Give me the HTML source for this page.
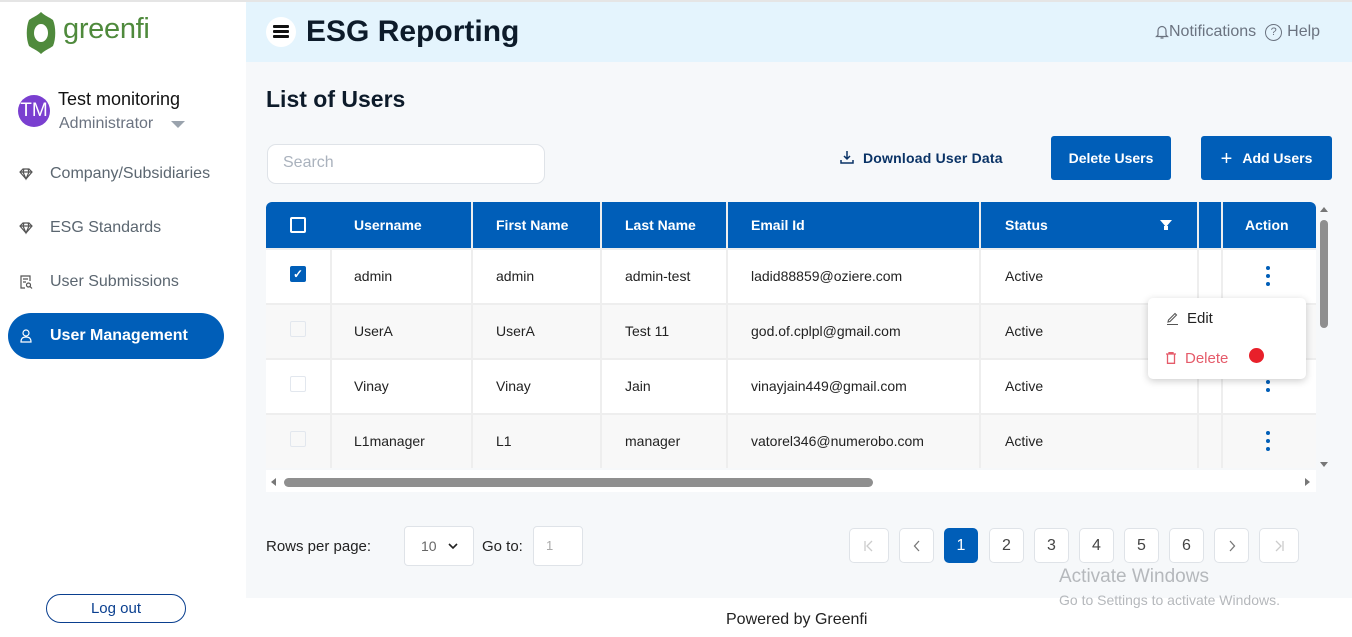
<!DOCTYPE html>
<html><head><meta charset="utf-8"><style>
*{box-sizing:border-box;margin:0;padding:0}
body{width:1352px;height:637px;overflow:hidden;position:relative;background:#fff;font-family:"Liberation Sans",sans-serif;color:#111}
.a{position:absolute}
.nav{position:absolute;left:18px;font-size:16px;color:#5b6670;display:flex;align-items:center}
.nav svg{margin-right:16px}
.th{position:absolute;top:202px;height:46px;color:#fff;font-weight:bold;font-size:14px;line-height:46px}
.cell{position:absolute;font-size:14px;color:#222}
.pg{position:absolute;top:528px;width:35px;height:35px;border:1px solid #dfe3e8;border-radius:5px;background:#fff;text-align:center;line-height:33px;font-size:16px;color:#444}
.pg svg{position:absolute;left:50%;top:50%;transform:translate(-50%,-50%)}
</style></head><body>
<div class="a" style="left:0;top:0;width:1352px;height:2px;background:#e5e5e5"></div>
<!-- sidebar -->
<svg class="a" style="left:26px;top:11px" width="30" height="44" viewBox="0 0 30 44"><path d="M15 1 C19 5 23 6 27 9 C30 16 30 28 27 35 C23 38 19 39 15 43 C11 39 7 38 3 35 C0 28 0 16 3 9 C7 6 11 5 15 1Z" fill="#4f8a3c"/><ellipse cx="15" cy="22" rx="7" ry="9" fill="#fff"/></svg>
<div class="a" style="left:63px;top:13px;font-size:29px;color:#4f8a3c;letter-spacing:-0.3px">greenfi</div>
<div class="a" style="left:18px;top:95px;width:32px;height:32px;border-radius:50%;background:#7a3fd0;color:#fff;font-size:19px;line-height:32px;text-align:center">TM</div>
<div class="a" style="left:58px;top:89px;font-size:18px;color:#111">Test monitoring</div>
<div class="a" style="left:59px;top:115px;font-size:16px;color:#6b7380">Administrator</div>
<div class="a" style="left:171px;top:121px;border-left:7px solid transparent;border-right:7px solid transparent;border-top:7px solid #9aa3ad"></div>
<div class="nav" style="top:165px"><svg width="16" height="16" viewBox="0 0 16 16" fill="none" stroke="#555" stroke-width="1.2"><path d="M2 6 L5 3 H11 L14 6 L8 13Z M2 6 H14 M6 3 L5 6 L8 13 L11 6 L10 3"/></svg>Company/Subsidiaries</div>
<div class="nav" style="top:219px"><svg width="16" height="16" viewBox="0 0 16 16" fill="none" stroke="#555" stroke-width="1.2"><path d="M2 6 L5 3 H11 L14 6 L8 13Z M2 6 H14 M6 3 L5 6 L8 13 L11 6 L10 3"/></svg>ESG Standards</div>
<div class="nav" style="top:273px"><svg width="16" height="16" viewBox="0 0 16 16" fill="none" stroke="#555" stroke-width="1.2"><path d="M12 7 V2 H3 V14 H7 M5 5 H10 M5 8 H8"/><circle cx="10.5" cy="11" r="2"/><path d="M12 12.5 L14 14.5"/></svg>User Submissions</div>
<div class="a" style="left:8px;top:313px;width:216px;height:46px;border-radius:23px;background:#005eb8"></div>
<div class="nav" style="top:327px;color:#fff;font-weight:bold"><svg width="16" height="16" viewBox="0 0 16 16" fill="none" stroke="#fff" stroke-width="1.2"><circle cx="8" cy="5" r="3"/><path d="M3 14 C3 10 5 9 8 9 C11 9 13 10 13 14Z"/></svg>User Management</div>
<div class="a" style="left:46px;top:594px;width:140px;height:29px;border:1.5px solid #0a3f8f;border-radius:15px;text-align:center;line-height:27px;font-size:15px;color:#0a3f8f">Log out</div>
<!-- header -->
<div class="a" style="left:246px;top:2px;width:1106px;height:60px;background:#e4f4fd"></div>
<div class="a" style="left:266px;top:17px;width:30px;height:30px;border-radius:50%;background:#fff"></div>
<div class="a" style="left:273px;top:25px;width:16px;height:3px;background:#111;box-shadow:0 5px 0 #111,0 10px 0 #111;border-radius:1px"></div>
<div class="a" style="left:306px;top:15px;font-size:30px;font-weight:bold;color:#0d1b2a">ESG Reporting</div>
<div class="a" style="left:1155px;top:23px;font-size:16px;color:#6b7380;display:flex;align-items:center"><svg width="14" height="16" viewBox="0 0 14 16" fill="none" stroke="#6b7380" stroke-width="1.2"><path d="M3 11 V7 C3 4 5 2.5 7 2.5 C9 2.5 11 4 11 7 V11 L12.5 12.5 H1.5Z M5.5 14 H8.5"/></svg>Notifications<span style="display:inline-block;width:17px;height:17px;border:1.3px solid #6b7380;border-radius:50%;font-size:11px;text-align:center;line-height:15px;margin:0 5px 0 9px">?</span>Help</div>
<!-- main -->
<div class="a" style="left:246px;top:62px;width:1106px;height:536px;background:#f6f8fa"></div>
<div class="a" style="left:266px;top:86px;font-size:23px;font-weight:bold;color:#0d1b2a">List of Users</div>
<div class="a" style="left:267px;top:144px;width:278px;height:40px;border:1px solid #dfe3e8;border-radius:9px;background:#fff;padding:9px 15px;font-size:16px;color:#aab2bd">Search</div>
<div class="a" style="left:839px;top:149px;font-size:14px;font-weight:bold;color:#0a3366;letter-spacing:0.2px"><svg width="16" height="16" viewBox="0 0 16 16" fill="none" stroke="#0a3366" stroke-width="1.5" style="vertical-align:-2px;margin-right:8px"><path d="M8 2 V10 M5 7 L8 10 L11 7 M2 11 V14 H14 V11"/></svg>Download User Data</div>
<div class="a" style="left:1051px;top:136px;width:120px;height:44px;background:#005eb8;border-radius:3px;color:#fff;font-weight:bold;font-size:14px;text-align:center;line-height:44px">Delete Users</div>
<div class="a" style="left:1201px;top:136px;width:131px;height:44px;background:#005eb8;border-radius:3px;color:#fff;font-weight:bold;font-size:14px;text-align:center;line-height:44px"><span style="font-size:20px;font-weight:normal;vertical-align:-2px;margin-right:10px">+</span>Add Users</div>
<!-- table -->
<div class="a" style="left:266px;top:202px;width:1050px;height:266px;background:#fff;border-radius:6px 6px 0 0;overflow:hidden">
<div class="a" style="left:0;top:0;width:1050px;height:46px;background:#005eb8"></div>
<div class="a" style="left:0;top:101px;width:1050px;height:55px;background:#f8f8f8"></div>
<div class="a" style="left:0;top:211px;width:1050px;height:55px;background:#f8f8f8"></div>
<div class="a" style="left:0;top:46px;width:1050px;height:2px;background:#eee"></div>
<div class="a" style="left:0;top:101px;width:1050px;height:2px;background:#eee"></div>
<div class="a" style="left:0;top:156px;width:1050px;height:2px;background:#eee"></div>
<div class="a" style="left:0;top:211px;width:1050px;height:2px;background:#eee"></div>
<div class="a" style="left:0;top:266px;width:1050px;height:2px;background:#eee"></div>
<div class="a" style="left:64px;top:46px;width:2px;height:220px;background:#eee"></div>
<div class="a" style="left:205px;top:0;width:2px;height:266px;background:#eee"></div>
<div class="a" style="left:334px;top:0;width:2px;height:266px;background:#eee"></div>
<div class="a" style="left:460px;top:0;width:2px;height:266px;background:#eee"></div>
<div class="a" style="left:713px;top:0;width:2px;height:266px;background:#eee"></div>
<div class="a" style="left:931px;top:0;width:2px;height:266px;background:#eee"></div>
<div class="a" style="left:955px;top:0;width:2px;height:266px;background:#eee"></div>
</div>
<div class="a" style="left:290px;top:217px;width:16px;height:16px;border:2px solid #fff;border-radius:2px"></div>
<div class="th" style="left:354px">Username</div>
<div class="th" style="left:496px">First Name</div>
<div class="th" style="left:625px">Last Name</div>
<div class="th" style="left:751px">Email Id</div>
<div class="th" style="left:1005px">Status</div>
<div class="a" style="left:1160px;top:220px;border-left:6px solid transparent;border-right:6px solid transparent;border-top:7px solid #fff"></div>
<div class="a" style="left:1164px;top:226px;width:4px;height:4px;background:#fff"></div>
<div class="th" style="left:1245px">Action</div>
<div class="a" style="left:290px;top:266px;width:16px;height:16px;background:#005eb8;border-radius:2px;color:#fff;font-size:12px;text-align:center;line-height:16px;font-weight:bold">✓</div>
<div class="a" style="left:290px;top:321px;width:16px;height:16px;border:1.5px solid #e2e7ee;border-radius:2px"></div>
<div class="a" style="left:290px;top:376px;width:16px;height:16px;border:1.5px solid #e2e7ee;border-radius:2px"></div>
<div class="a" style="left:290px;top:431px;width:16px;height:16px;border:1.5px solid #e2e7ee;border-radius:2px"></div>
<div class="cell" style="left:354px;top:268px">admin</div><div class="cell" style="left:496px;top:268px">admin</div><div class="cell" style="left:625px;top:268px">admin-test</div><div class="cell" style="left:751px;top:268px">ladid88859@oziere.com</div><div class="cell" style="left:1005px;top:268px">Active</div>
<div class="cell" style="left:354px;top:323px">UserA</div><div class="cell" style="left:496px;top:323px">UserA</div><div class="cell" style="left:625px;top:323px">Test 11</div><div class="cell" style="left:751px;top:323px">god.of.cplpl@gmail.com</div><div class="cell" style="left:1005px;top:323px">Active</div>
<div class="cell" style="left:354px;top:378px">Vinay</div><div class="cell" style="left:496px;top:378px">Vinay</div><div class="cell" style="left:625px;top:378px">Jain</div><div class="cell" style="left:751px;top:378px">vinayjain449@gmail.com</div><div class="cell" style="left:1005px;top:378px">Active</div>
<div class="cell" style="left:354px;top:433px">L1manager</div><div class="cell" style="left:496px;top:433px">L1</div><div class="cell" style="left:625px;top:433px">manager</div><div class="cell" style="left:751px;top:433px">vatorel346@numerobo.com</div><div class="cell" style="left:1005px;top:433px">Active</div>
<div class="a" style="left:1266px;top:266px;width:4px;height:4px;border-radius:50%;background:#005eb8;box-shadow:0 8px 0 #005eb8,0 16px 0 #005eb8"></div>
<div class="a" style="left:1266px;top:380px;width:4px;height:4px;border-radius:50%;background:#005eb8;box-shadow:0 8px 0 #005eb8"></div>
<div class="a" style="left:1266px;top:431px;width:4px;height:4px;border-radius:50%;background:#005eb8;box-shadow:0 8px 0 #005eb8,0 16px 0 #005eb8"></div>
<!-- scrollbars -->
<div class="a" style="left:1316px;top:202px;width:16px;height:266px;background:#f6f8fa"></div>
<div class="a" style="left:1320px;top:220px;width:8px;height:108px;border-radius:4px;background:#8f8f8f"></div>
<div class="a" style="left:1320px;top:207px;border-left:4px solid transparent;border-right:4px solid transparent;border-bottom:5px solid #777"></div>
<div class="a" style="left:1320px;top:462px;border-left:4px solid transparent;border-right:4px solid transparent;border-top:5px solid #777"></div>
<div class="a" style="left:266px;top:470px;width:1050px;height:22px;background:#fff"></div>
<div class="a" style="left:284px;top:478px;width:589px;height:9px;border-radius:5px;background:#8f8f8f"></div>
<div class="a" style="left:271px;top:478px;border-top:4px solid transparent;border-bottom:4px solid transparent;border-right:5px solid #777"></div>
<div class="a" style="left:1305px;top:478px;border-top:4px solid transparent;border-bottom:4px solid transparent;border-left:5px solid #777"></div>
<!-- popup -->
<div class="a" style="left:1148px;top:298px;width:158px;height:81px;background:#fff;border-radius:5px;box-shadow:0 2px 8px rgba(0,0,0,.2)"></div>
<div class="a" style="left:1166px;top:310px;font-size:15px;color:#222;display:flex;align-items:center"><svg width="13" height="13" viewBox="0 0 13 13" fill="none" stroke="#555" stroke-width="1.1" style="margin-right:8px"><path d="M2 10 L2.5 8 L9 1.5 L10.5 3 L4 9.5Z M1 12.5 H12"/></svg>Edit</div>
<div class="a" style="left:1166px;top:350px;font-size:15px;color:#e55b6a"><svg width="10" height="12" viewBox="0 0 10 12" fill="none" stroke="#e55b6a" stroke-width="1.3" style="margin-right:9px;vertical-align:-1px"><path d="M0 2 H10 M3 2 V0.7 H7 V2 M1.5 2 V11.3 H8.5 V2"/></svg>Delete</div>
<div class="a" style="left:1249px;top:348px;width:15px;height:15px;border-radius:50%;background:#e8202a"></div>
<!-- pagination -->
<div class="a" style="left:266px;top:538px;font-size:15px;color:#222">Rows per page:</div>
<div class="a" style="left:404px;top:526px;width:70px;height:40px;border:1px solid #dfe3e8;border-radius:4px;background:#fff;padding:11px 16px;font-size:14px;color:#666">10<svg width="10" height="7" viewBox="0 0 10 7" fill="none" stroke="#222" stroke-width="1.6" style="position:absolute;left:43px;top:16px"><path d="M1 1 L5 5 L9 1"/></svg></div>
<div class="a" style="left:482px;top:538px;font-size:15px;color:#222">Go to:</div>
<div class="a" style="left:533px;top:526px;width:50px;height:40px;border:1px solid #dfe3e8;border-radius:4px;background:#fff;padding:11px 12px;font-size:13px;color:#aaa">1</div>
<div class="pg" style="left:849px;width:40px"><svg width="12" height="12" viewBox="0 0 12 12" fill="none" stroke="#ccc" stroke-width="1.3"><path d="M2 1 V11 M9 1 L4 6 L9 11"/></svg></div>
<div class="pg" style="left:899px"><svg width="8" height="12" viewBox="0 0 8 12" fill="none" stroke="#777" stroke-width="1.3"><path d="M6 1 L1.5 6 L6 11"/></svg></div>
<div class="pg" style="left:944px;width:34px;background:#005eb8;border-color:#005eb8;color:#fff">1</div>
<div class="pg" style="left:989px">2</div><div class="pg" style="left:1034px">3</div><div class="pg" style="left:1079px">4</div><div class="pg" style="left:1124px">5</div><div class="pg" style="left:1169px">6</div>
<div class="pg" style="left:1214px"><svg width="8" height="12" viewBox="0 0 8 12" fill="none" stroke="#777" stroke-width="1.3"><path d="M2 1 L6.5 6 L2 11"/></svg></div>
<div class="pg" style="left:1259px;width:40px"><svg width="12" height="12" viewBox="0 0 12 12" fill="none" stroke="#ccc" stroke-width="1.3"><path d="M10 1 V11 M3 1 L8 6 L3 11"/></svg></div>
<div class="a" style="left:1059px;top:566px;font-size:19px;color:#b5b8bc">Activate Windows</div>
<div class="a" style="left:1059px;top:592px;font-size:14px;color:#b5b8bc">Go to Settings to activate Windows.</div>
<div class="a" style="left:726px;top:611px;font-size:16px;color:#222">Powered by Greenfi</div>
</body></html>
